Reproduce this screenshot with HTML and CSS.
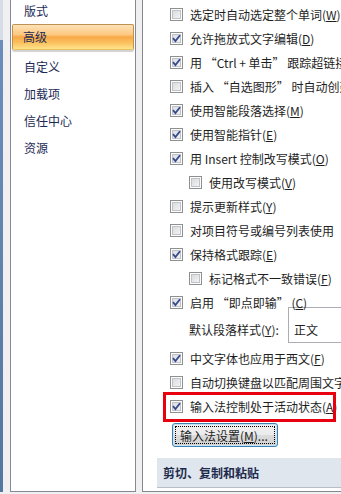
FILE: index.html
```html
<!DOCTYPE html>
<html lang="zh-CN">
<head>
    <meta charset="UTF-8">
    <meta name="viewport" content="width=device-width, initial-scale=1.0">
    <title>Word 选项 - 高级</title>
    <link rel="stylesheet" href="styles.css">
</head>
<body>
    <div class="window">
        <div class="edge"></div>

        <div class="sidebar">
            <ul class="nav">
                <li>版式</li>
                <li class="active">高级</li>
                <li>自定义</li>
                <li>加载项</li>
                <li>信任中心</li>
                <li>资源</li>
            </ul>
        </div>

        <div class="content">
            <div class="options">
                <div class="opt"><span class="cb"></span>选定时自动选定整个单词(<u>W</u>)</div>
                <div class="opt"><span class="cb checked"><svg viewBox="0 0 11 11"><path d="M2 5.2 L4.4 8 L9 2.2"/></svg></span>允许拖放式文字编辑(<u>D</u>)</div>
                <div class="opt"><span class="cb checked"><svg viewBox="0 0 11 11"><path d="M2 5.2 L4.4 8 L9 2.2"/></svg></span>用 “Ctrl + 单击” 跟踪超链接(<u>H</u>)</div>
                <div class="opt"><span class="cb"></span>插入 “自选图形” 时自动创建绘图画布(<u>A</u>)</div>
                <div class="opt"><span class="cb checked"><svg viewBox="0 0 11 11"><path d="M2 5.2 L4.4 8 L9 2.2"/></svg></span>使用智能段落选择(<u>M</u>)</div>
                <div class="opt"><span class="cb checked"><svg viewBox="0 0 11 11"><path d="M2 5.2 L4.4 8 L9 2.2"/></svg></span>使用智能指针(<u>E</u>)</div>
                <div class="opt"><span class="cb checked"><svg viewBox="0 0 11 11"><path d="M2 5.2 L4.4 8 L9 2.2"/></svg></span>用 Insert 控制改写模式(<u>O</u>)</div>
                <div class="opt sub"><span class="cb"></span>使用改写模式(<u>V</u>)</div>
                <div class="opt"><span class="cb"></span>提示更新样式(<u>Y</u>)</div>
                <div class="opt"><span class="cb"></span>对项目符号或编号列表使用“普通”样式(<u>L</u>)</div>
                <div class="opt"><span class="cb checked"><svg viewBox="0 0 11 11"><path d="M2 5.2 L4.4 8 L9 2.2"/></svg></span>保持格式跟踪(<u>E</u>)</div>
                <div class="opt sub"><span class="cb"></span>标记格式不一致错误(<u>F</u>)</div>
                <div class="opt"><span class="cb checked"><svg viewBox="0 0 11 11"><path d="M2 5.2 L4.4 8 L9 2.2"/></svg></span>启用 “即点即输” (<u>C</u>)</div>

                <div class="field">
                    <span class="field-label">默认段落样式(<u>Y</u>):</span>
                    <span class="select">正文</span>
                </div>

                <div class="opt"><span class="cb checked"><svg viewBox="0 0 11 11"><path d="M2 5.2 L4.4 8 L9 2.2"/></svg></span>中文字体也应用于西文(<u>F</u>)</div>
                <div class="opt"><span class="cb"></span>自动切换键盘以匹配周围文字的语言(<u>K</u>)</div>
                <div class="opt marked"><span class="cb checked"><svg viewBox="0 0 11 11"><path d="M2 5.2 L4.4 8 L9 2.2"/></svg></span>输入法控制处于活动状态(<u>A</u>)<span class="mark"></span></div>
            </div>

            <button class="ime-btn">输入法设置(<u>M</u>)...</button>

            <div class="section-head">剪切、复制和粘贴</div>
        </div>
    </div>
</body>
</html>
```

FILE: styles.css
```css
/* Reset */
* {
    margin: 0;
    padding: 0;
    box-sizing: border-box;
}

body {
    font-family: "Noto Sans CJK SC", "Noto Sans", sans-serif;
    font-size: 12px;
    color: #1e1e1e;
    background-color: #f0f0f0;
    width: 341px;
    height: 494px;
    overflow: hidden;
}

u {
    text-decoration: underline;
    text-underline-offset: 1px;
}

.window {
    display: flex;
    height: 492px;
}

.edge {
    width: 3px;
    flex: none;
    margin-right: 7px;
    background: linear-gradient(#d5dce7 0, #d5dce7 40px, #6a8dbd 40px, #54779f 100%);
}

/* Left navigation */
.sidebar {
    width: 126px;
    flex: none;
    margin-right: 6px;
    background-color: #fff;
    border: 1px solid #858896;
    border-top: none;
}

.nav {
    list-style: none;
    margin-top: -3px;
}

.nav li {
    height: 27px;
    line-height: 27px;
    padding-left: 13px;
    color: #1c2a55;
}

.nav li.active {
    height: 26px;
    line-height: 24px;
    margin: 0 1px 3px;
    padding-left: 10px;
    border: 1px solid #c0924f;
    border-bottom-color: #e8c25a;
    border-radius: 2px;
    background: linear-gradient(#fde2b8 0%, #fcc880 40%, #f9a847 50%, #fbc25f 75%, #fde48c 100%);
    box-shadow: 0 2px 1px rgba(0, 0, 0, 0.18);
}

/* Right options panel */
.content {
    flex: 1;
    min-width: 0;
    background-color: #fff;
    border-left: 1px solid #828790;
    border-bottom: 1px solid #828790;
    overflow: hidden;
}

.options {
    padding-top: 2px;
}

.opt {
    position: relative;
    display: flex;
    align-items: center;
    height: 24px;
    padding-left: 27px;
    white-space: nowrap;
}

.opt.sub {
    padding-left: 46px;
}

.cb {
    width: 13px;
    height: 13px;
    flex: none;
    margin-right: 7px;
    border: 1px solid #8e8f8f;
    background: linear-gradient(135deg, #d4d6da, #f8f8f8);
    box-shadow: inset 0 0 0 1px #fdfdfd, inset 0 0 0 2px #bfc3c9;
}

.cb svg {
    display: block;
    width: 11px;
    height: 11px;
}

.cb svg path {
    fill: none;
    stroke: #34488a;
    stroke-width: 1.8;
}

.field {
    display: flex;
    align-items: center;
    height: 36px;
    margin-top: -7px;
    margin-bottom: 3px;
    padding-left: 46px;
    white-space: nowrap;
}

.field-label {
    width: 99px;
    flex: none;
    padding-top: 8px;
}

.select {
    display: flex;
    align-items: center;
    width: 120px;
    height: 36px;
    flex: none;
    padding: 8px 0 0 5px;
    border: 1px solid #abadb3;
}

/* Annotation frame */
.mark {
    position: absolute;
    left: 20px;
    top: -2px;
    width: 173px;
    height: 30px;
    border: 3px solid #e8000f;
}

.ime-btn {
    display: block;
    margin: 5px 0 0 29px;
    width: 106px;
    height: 24px;
    padding-left: 7px;
    text-align: left;
    font-family: inherit;
    font-size: 12px;
    color: #1e1e1e;
    border: 1px solid #3c7fb1;
    border-radius: 3px;
    background: linear-gradient(#f2f2f2 0%, #ebebeb 50%, #dddddd 50%, #cfcfcf 100%);
    box-shadow: inset 0 0 0 1px #c6e4f6;
    outline: 1px dotted #000;
    outline-offset: -4px;
}

.section-head {
    margin: 11px 0 0 14px;
    height: 30px;
    line-height: 29px;
    padding-left: 6px;
    font-weight: bold;
    color: #1d2b4d;
    background-color: #dfe6ee;
    border-bottom: 1px solid #b6bec8;
    white-space: nowrap;
}
```
